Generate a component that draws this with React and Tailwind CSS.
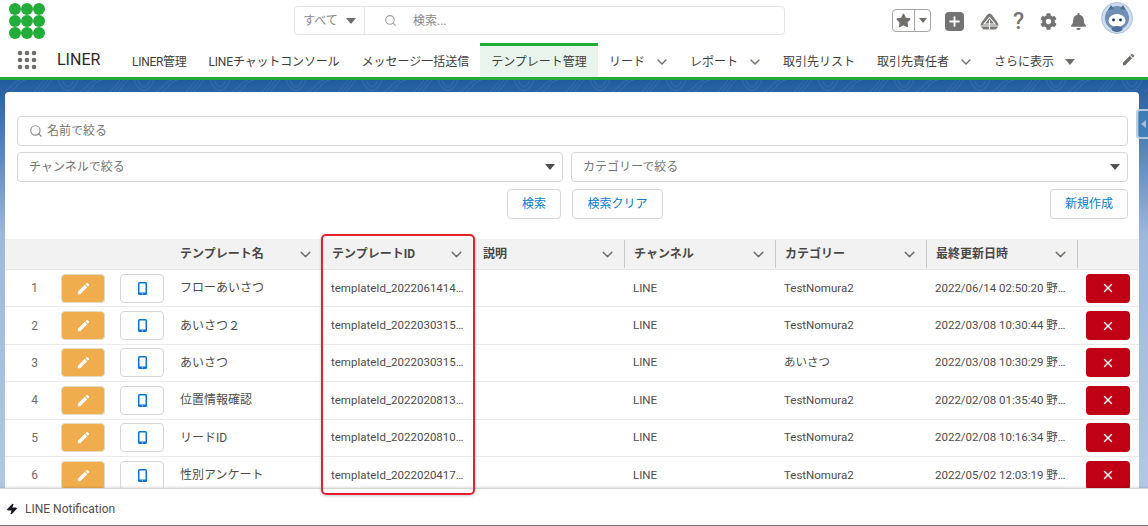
import React from 'react';
import { Search, ChevronDown, Plus, Zap, X } from 'lucide-react';
import { FaStar, FaCog, FaBell } from 'react-icons/fa';
import { MdEdit } from 'react-icons/md';

const font = 'font-["Roboto","Noto_Sans_CJK_JP",sans-serif]';

const navItems = [
  { label: 'LINER管理', tight: 'tracking-[-0.3px]' },
  { label: 'LINEチャットコンソール', tight: 'tracking-[-0.15px]' },
  { label: 'メッセージ一括送信' },
  { label: 'テンプレート管理', active: true },
  { label: 'リード', menu: true },
  { label: 'レポート', menu: true },
  { label: '取引先リスト' },
  { label: '取引先責任者', menu: true },
];

const columns = ['テンプレート名', 'テンプレートID', '説明', 'チャンネル', 'カテゴリー', '最終更新日時'];

const rows = [
  ['フローあいさつ', 'templateId_20220614145020', 'TestNomura2', '2022/06/14 02:50:20 野村太郎'],
  ['あいさつ２', 'templateId_20220303151030', 'TestNomura2', '2022/03/08 10:30:44 野村太郎'],
  ['あいさつ', 'templateId_20220303151029', 'あいさつ', '2022/03/08 10:30:29 野村太郎'],
  ['位置情報確認', 'templateId_20220208133540', 'TestNomura2', '2022/02/08 01:35:40 野村太郎'],
  ['リードID', 'templateId_20220208101634', 'TestNomura2', '2022/02/08 10:16:34 野村太郎'],
  ['性別アンケート', 'templateId_20220204171203', 'TestNomura2', '2022/05/02 12:03:19 野村太郎'],
];

function Caret({ className }) {
  return <span className={`block w-0 h-0 border-x-[5px] border-x-transparent border-t-[6px] ${className}`} />;
}

function Logo() {
  return (
    <svg width="36" height="36" viewBox="0 0 36 36">
      {[6, 18, 30].map((y) =>
        [6, 18, 30].map((x) => <circle key={`${x}-${y}`} cx={x} cy={y} r="6" fill="#22ac38" />)
      )}
    </svg>
  );
}

function AppGrid() {
  return (
    <svg width="20" height="20" viewBox="0 0 20 20">
      {[3, 10, 17].map((y) =>
        [3, 10, 17].map((x) => <circle key={`${x}-${y}`} cx={x} cy={y} r="2.3" fill="#706e6b" />)
      )}
    </svg>
  );
}

function TrailIcon() {
  return (
    <svg width="19" height="17" viewBox="0 0 19 17">
      <path d="M9.5 0.5 Q11 0.5 12 2 L17.5 9.5 Q19.5 13 17 15 Q16 16.5 14 16.5 H5 Q3 16.5 2 15 Q-0.5 13 1.500 9.500 L7 2 Q8 0.5 9.500 0.500 Z" fill="#7b7977" />
      <path d="M9.5 4.500 L4 11 H15 Z M9.500 7 V16.500 M1 13 H18" fill="none" stroke="#fff" strokeWidth="1.1" />
    </svg>
  );
}

function Avatar() {
  return (
    <svg width="32" height="32" viewBox="0 0 32 32">
      <circle cx="16" cy="16" r="15.5" fill="#cddcee" stroke="#9db4d0" strokeWidth="0.7" />
      <circle cx="16" cy="16" r="12" fill="#6f8fb5" />
      <path d="M7 8 L10 3 L13 7 Z M25 8 L22 3 L19 7 Z" fill="#4d6f99" />
      <ellipse cx="16" cy="18.500" rx="8.500" ry="6.500" fill="#fff" />
      <circle cx="12.500" cy="18" r="1.400" fill="#16325c" />
      <circle cx="19.500" cy="18" r="1.400" fill="#16325c" />
      <ellipse cx="16" cy="27" rx="5.500" ry="3" fill="#4d6f99" />
    </svg>
  );
}

function PhoneIcon() {
  return (
    <svg width="9" height="13" viewBox="0 0 9 13">
      <rect width="9" height="13" rx="1.500" fill="#0b72d6" />
      <rect x="1.500" y="1.500" width="6" height="9" fill="#fff" />
      <circle cx="4.500" cy="11.800" r="0.600" fill="#fff" />
    </svg>
  );
}

function Contours() {
  // faint topographic lines on the page background
  const d = [];
  for (let i = 0; i < 16; i++) {
    const x = i * 76;
    d.push(
      `M${x + 4} 12 C${x + 14} 6 ${x + 10} 3 ${x + 20} 0`,
      `M${x + 10} 12 C${x + 20} 7 ${x + 14} 3 ${x + 26} 0`,
      `M${x + 34} 12 L${x + 44} 0 M${x + 38} 12 L${x + 48} 0 M${x + 42} 12 L${x + 52} 0`,
      `M${x + 58} 0 C${x + 64} 14 ${x + 72} 14 ${x + 78} 0`,
      `M${x + 62} 0 C${x + 66} 9 ${x + 70} 9 ${x + 74} 0`
    );
  }
  return (
    <svg className="block" width="1148" height="12" viewBox="0 0 1148 12">
      <path d={d.join(' ')} fill="none" stroke="#6f9acb" strokeWidth="0.6" opacity="0.45" />
    </svg>
  );
}

function Header() {
  return (
    <div className="h-[42px] flex items-center bg-white pl-[9px] pr-[15px]">
      <Logo />
      <div className="ml-[249px] w-[491px] h-[29px] -mt-[1px] flex items-center border border-[#e6e6e6] rounded text-[12px] text-[#8a8886]">
        <div className="w-[70px] h-full flex items-center justify-center gap-2 border-r border-[#e6e6e6]">
          <span>すべて</span>
          <Caret className="border-t-[#706e6b]" />
        </div>
        <Search size={13} className="ml-[19px] text-[#a3a1a0]" />
        <span className="ml-[16px]">検索...</span>
      </div>
      <div className="ml-auto flex items-center">
        <div className="w-[39px] h-[23px] flex border border-[#a8a6a4] rounded -mt-[1px]">
          <div className="w-[22px] flex items-center justify-center border-r border-[#a8a6a4]">
            <FaStar size={15} className="text-[#706e6b]" />
          </div>
          <div className="flex-1 flex items-center justify-center">
            <span className="block w-0 h-0 border-x-[4px] border-x-transparent border-t-[5px] border-t-[#706e6b]" />
          </div>
        </div>
        <div className="ml-[14px] w-[19px] h-[19px] rounded bg-[#747474] flex items-center justify-center">
          <Plus size={15} strokeWidth={3} className="text-white" />
        </div>
        <div className="ml-[16px]"><TrailIcon /></div>
        <span className="ml-[13px] w-[13px] text-center text-[23px] leading-none font-medium text-[#747474]">?</span>
        <FaCog size={17} className="ml-[15px] text-[#747474]" />
        <FaBell size={17} className="ml-[13px] text-[#747474]" />
        <div className="ml-[14px] -mt-[6px]"><Avatar /></div>
      </div>
    </div>
  );
}

function Nav() {
  return (
    <div className="h-[38px] flex items-stretch bg-white border-b-[3px] border-[#22ac38] text-[12px] text-[#3e3e3c]">
      <div className="w-[53px] flex items-center justify-center"><AppGrid /></div>
      <div className="w-[68px] flex items-center text-[16px] text-[#2b2826] pl-[4px]">LINER</div>
      <div className="flex items-stretch mt-[1px]">
        {navItems.map((item) => (
          <div
            key={item.label}
            className={`flex items-center px-[11px] whitespace-nowrap border-t-[3px] ${item.tight || ''} ${
              item.active ? 'bg-[#e9f5ec] border-[#22ac38]' : 'border-transparent'
            }`}
          >
            <span>{item.label}</span>
            {item.menu && <ChevronDown size={16} className="ml-[9px] -mr-[2px] text-[#706e6b]" />}
          </div>
        ))}
        <div className="flex items-center pl-[11px] whitespace-nowrap border-t-[3px] border-transparent">
          <span>さらに表示</span>
          <Caret className="ml-[11px] border-t-[#706e6b]" />
        </div>
      </div>
      <div className="ml-auto flex items-center pr-[12px]">
        <MdEdit size={15} className="text-[#706e6b]" />
      </div>
    </div>
  );
}

function Field({ label, icon, caret, className = '' }) {
  return (
    <div className={`h-[30px] flex items-center border border-[#d9d7d5] rounded px-[11px] text-[12px] text-[#757575] ${className}`}>
      {icon && <Search size={14} className="mr-[4px] text-[#8f8d8b]" />}
      <span>{label}</span>
      {caret && <Caret className="ml-auto -mr-[4px] border-t-[#514f4d]" />}
    </div>
  );
}

function Btn({ children, className = '' }) {
  return (
    <button className={`h-[30px] bg-white border border-[#d9d7d5] rounded text-[12px] text-[#0b7ad1] ${className}`}>
      {children}
    </button>
  );
}

function Table() {
  return (
    <div className="mt-[20px]">
      <div className="grid grid-cols-[46px_60px_60px_repeat(6,151px)_62px] h-[31px] bg-[#f3f2f2] border-b border-[#e5e5e5] text-[12px] font-bold text-[#4a4846]">
        <div className="col-span-3" />
        {columns.map((c, i) => (
          <div key={c} className={`flex items-center pl-[9px] pr-[8px] my-[1px] ${i > 0 ? 'border-l border-[#c9c7c5]' : ''}`}>
            <span>{c}</span>
            <ChevronDown size={17} className="ml-auto text-[#706e6b]" />
          </div>
        ))}
        <div className="my-[1px] border-l border-[#c9c7c5]" />
      </div>
      {rows.map((r, i) => (
        <div
          key={r[1]}
          className="grid grid-cols-[46px_60px_60px_repeat(6,151px)_62px] h-[37.4px] items-center border-b border-[#ebebeb] text-[12px] text-[#4f4d4b]"
        >
          <div className="text-center text-[#706e6b] pl-[13px]">{i + 1}</div>
          <div className="pl-[10px]">
            <div className="w-[44px] h-[29px] flex items-center justify-center rounded bg-[#f0ad4e] border border-[#e5dcc8]">
              <MdEdit size={15} className="text-white" />
            </div>
          </div>
          <div className="pl-[9px]">
            <div className="w-[44px] h-[29px] flex items-center justify-center rounded bg-white border border-[#d9d7d5]">
              <PhoneIcon />
            </div>
          </div>
          <div className="pl-[9px]">{r[0]}</div>
          <div className="pl-[9px] pr-[6px] truncate text-[11.5px]">{r[1]}</div>
          <div />
          <div className="pl-[9px] text-[11.5px]">LINE</div>
          <div className="pl-[9px] text-[11.5px]">{r[2]}</div>
          <div className="pl-[9px] pr-[9px] truncate text-[11.5px]">{r[3]}</div>
          <div className="pl-[9px]">
            <div className="w-[44px] h-[29px] flex items-center justify-center rounded bg-[#c00014]">
              <X size={14} strokeWidth={2.4} className="text-white" />
            </div>
          </div>
        </div>
      ))}
    </div>
  );
}

export default function App() {
  return (
    <div className={`w-[1148px] h-[526px] overflow-hidden relative bg-white ${font}`}>
      <Header />
      <Nav />
      <div className="h-[446px] bg-linear-to-b from-[#1f5c9e] via-[#9db9da] via-35% to-[#b5cae3]">
        <div className="h-[12px] overflow-hidden"><Contours /></div>
        <div className="ml-[5px] w-[1134px] bg-white rounded-t h-[400px] overflow-hidden">
          <div className="pl-[12px] pr-[11px] pt-[24px]">
            <Field label="名前で絞る" icon />
            <div className="flex gap-[8px] mt-[6px]">
              <Field label="チャンネルで絞る" caret className="w-[546px]" />
              <Field label="カテゴリーで絞る" caret className="flex-1" />
            </div>
            <div className="flex justify-end gap-[11px] mt-[7px] pr-[465px] relative">
              <Btn className="w-[54px]">検索</Btn>
              <Btn className="w-[91px]">検索クリア</Btn>
              <div className="absolute right-0 top-0"><Btn className="w-[78px]">新規作成</Btn></div>
            </div>
          </div>
          <Table />
        </div>
      </div>

      {/* utility bar sits over the page */}
      <div className="absolute left-0 right-0 top-[488px] h-[37px] bg-white border-t border-[#d5d5d5] shadow-[0_-1px_2px_rgba(0,0,0,0.12)] flex items-center pl-[6px] pt-[3px] text-[12px] text-[#514f4d]">
        <Zap size={12} fill="#16191f" className="text-[#16191f]" />
        <span className="ml-[7px]">LINE Notification</span>
      </div>
      <div className="absolute left-0 right-0 top-[525px] h-[1px] bg-[#777]" />

      {/* sidebar handle on the right edge */}
      <div className="absolute left-[1136px] top-[109px] w-[16px] h-[30px] rounded border-2 border-[#d3dce8]/80 bg-[#3f7fb8]/80 flex items-center pl-[3px]">
        <span className="block w-0 h-0 border-y-[4px] border-y-transparent border-r-[5px] border-r-white/50" />
      </div>

      {/* red highlight drawn over the table */}
      <div className="absolute left-[321px] top-[234px] w-[154px] h-[261px] border-2 border-[#e8202a] rounded-[5px] shadow-[0_1px_3px_rgba(0,0,0,0.2)]" />
    </div>
  );
}
